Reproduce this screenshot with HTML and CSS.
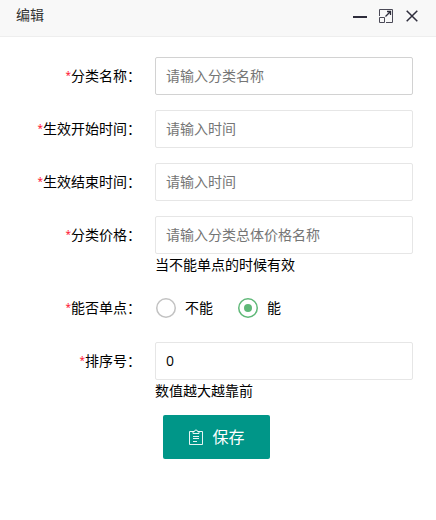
FILE: index.html
```html
<!DOCTYPE html>
<html lang="zh-CN">
<head>
<meta charset="utf-8">
<title>编辑</title>
<link rel="stylesheet" href="styles.css">
</head>
<body>
<header class="titlebar">
  <span class="title">编辑</span>
  <div class="tools">
    <svg width="14" height="16" viewBox="0 0 14 16"><path d="M0 9h14" stroke="#2e2d3c" stroke-width="2"/></svg>
    <svg width="14" height="16" viewBox="0 0 14 16" fill="none" stroke="#4b4a57"><path d="M.5 8V1.500h13v13H7"/><path d="M.5 9.500h5v5h-5z"/><path d="M6.500 8.500l5-5M8 3.500h3.500V7" stroke="#2e2d3c" stroke-width="1.300"/></svg>
    <svg width="12" height="16" viewBox="0 0 12 16"><path d="M.7 2.700l10.600 10.600M11.300 2.700L.7 13.300" stroke="#2e2d3c" stroke-width="1.500"/></svg>
  </div>
</header>
<form class="form">
  <div class="item">
    <label class="label"><span class="star">*</span>分类名称：</label>
    <div class="field"><input class="input focused" type="text" placeholder="请输入分类名称"></div>
  </div>
  <div class="item">
    <label class="label"><span class="star">*</span>生效开始时间：</label>
    <div class="field"><input class="input" type="text" placeholder="请输入时间"></div>
  </div>
  <div class="item">
    <label class="label"><span class="star">*</span>生效结束时间：</label>
    <div class="field"><input class="input" type="text" placeholder="请输入时间"></div>
  </div>
  <div class="item">
    <label class="label"><span class="star">*</span>分类价格：</label>
    <div class="field"><input class="input" type="text" placeholder="请输入分类总体价格名称"><div class="hint">当不能单点的时候有效</div></div>
  </div>
  <div class="item">
    <label class="label"><span class="star">*</span>能否单点：</label>
    <div class="field radios">
      <span class="radio"><i class="ring"></i>不能</span>
      <span class="radio"><i class="ring checked"></i>能</span>
    </div>
  </div>
  <div class="item">
    <label class="label"><span class="star">*</span>排序号：</label>
    <div class="field"><input class="input" type="text" value="0"><div class="hint">数值越大越靠前</div></div>
  </div>
  <button class="save" type="button">
    <svg width="16" height="16" viewBox="0 0 16 16" fill="none" stroke="#fff" stroke-opacity=".9"><path d="M5.500 2.500h-4v13h13v-13h-4"/><path d="M5 4.500v-2h1.500a1.500 1.500 0 0 1 3 0H11v2zM5 7.500h6M5 9.500h6M5 12.500h4"/></svg>
    <span>保存</span>
  </button>
</form>
</body>
</html>
```
FILE: styles.css
```css
* { box-sizing: border-box; }
body {
  margin: 0;
  background: #fff;
  color: #000;
  font: 14px/20px "Open Sans", "Noto Sans CJK SC", sans-serif;
}
.titlebar {
  display: flex;
  justify-content: space-between;
  height: 37px;
  padding: 0 18px 0 16px;
  background: #f8f8f8;
  border-bottom: 1px solid #eee;
}
.title { color: #333; line-height: 29px; }
.tools { display: flex; gap: 12px; padding-top: 8px; }
.tools svg { display: block; }
.tools svg:nth-child(2) { margin-right: 1px; }
.form { padding: 20px 23px 0 0; }
.item { display: flex; margin-bottom: 15px; }
.label {
  width: 155px;
  height: 38px;
  padding: 9px 14px 9px 0;
  text-align: right;
  white-space: nowrap;
}
.star {
  color: #ff0018;
  font-family: "Open Sans", sans-serif;
  font-size: 10px;
  line-height: 1;
  vertical-align: 2px;
}
.field { flex: 1; }
.input {
  display: block;
  width: 100%;
  height: 38px;
  padding: 0 10px 2px;
  border: 1px solid #e6e6e6;
  border-radius: 2px;
  background: #fff;
  color: #000;
  font: inherit;
  outline: none;
}
.input::placeholder { color: #757575; opacity: 1; }
.focused { border-color: #d2d2d2; }
.hint { height: 20px; line-height: 22px; }
.radios { display: flex; gap: 25px; height: 38px; align-items: center; }
.radio { display: flex; align-items: center; gap: 8px; }
.ring {
  display: flex;
  width: 20px;
  height: 20px;
  margin: 0 1px;
  align-items: center;
  justify-content: center;
  border-radius: 50%;
  box-shadow: inset 0 0 0 1.5px #c2c2c2;
}
.radio + .radio { margin-left: -1px; }
.checked { box-shadow: inset 0 0 0 1.5px #5fb878; }
.checked::before {
  content: "";
  width: 8px;
  height: 8px;
  border-radius: 50%;
  background: #5fb878;
}
.save {
  display: flex;
  align-items: center;
  justify-content: center;
  gap: 8px;
  width: 107px;
  height: 44px;
  margin: 0 0 0 163px;
  padding: 0;
  border: 0;
  border-radius: 2px;
  background: #009688;
  color: #fff;
  font: 16px/44px "Open Sans", "Noto Sans CJK SC", sans-serif;
}
```
